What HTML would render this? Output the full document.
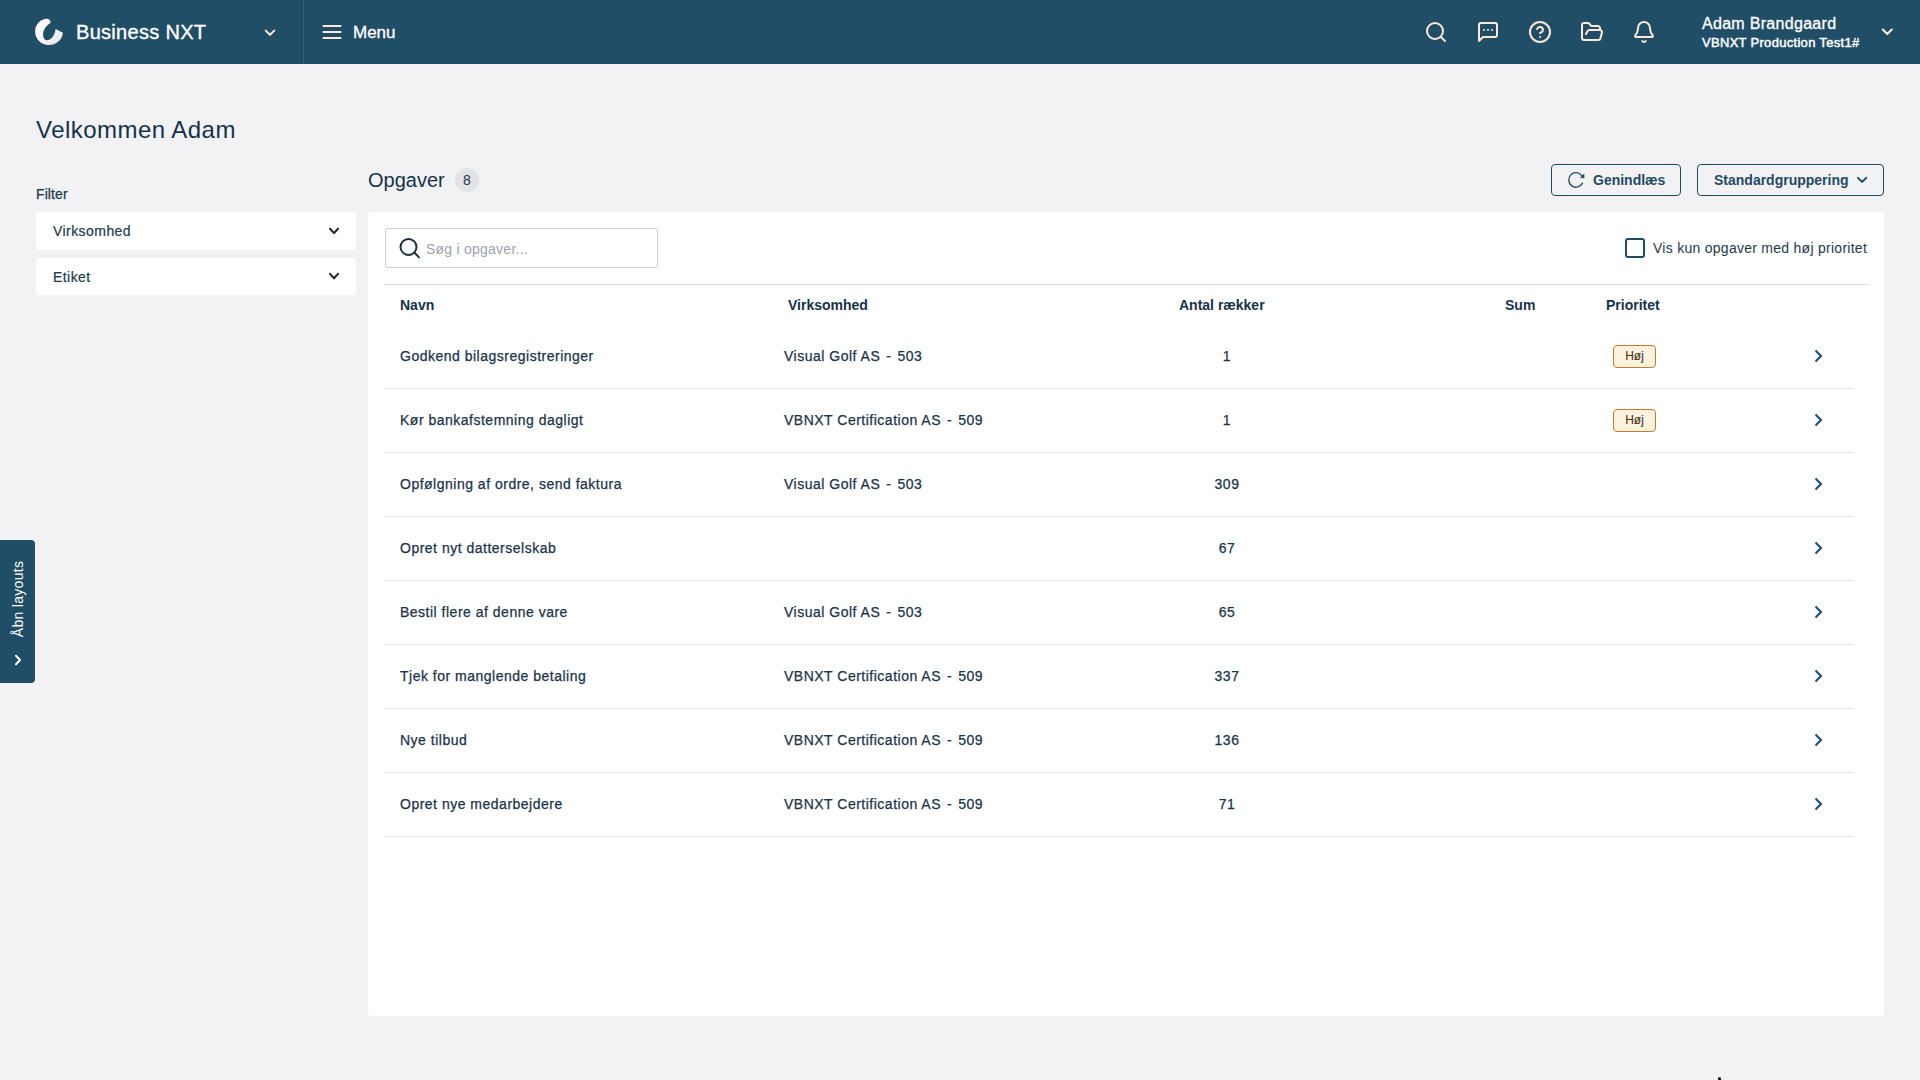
<!DOCTYPE html>
<html><head><meta charset="utf-8">
<style>
*{box-sizing:border-box;margin:0;padding:0}
html,body{width:1920px;height:1080px;overflow:hidden}
body{background:#f2f2f4;font-family:"Liberation Sans",sans-serif;color:#1b3a4c;position:relative}
.abs{position:absolute}
#hdr{position:absolute;left:0;top:0;width:1920px;height:64px;background:#214e67}
#hdr .div{position:absolute;left:303px;top:0;width:1px;height:64px;background:#335f78}
.brand{position:absolute;left:76px;top:20px;font-size:20px;letter-spacing:0.3px;color:#fff;white-space:nowrap;line-height:24px;-webkit-text-stroke:0.35px #fff}
.menu{position:absolute;left:353px;top:22.5px;font-size:17px;color:#fff;line-height:20px;-webkit-text-stroke:0.3px #fff}
.ic{position:absolute}
.hi{fill:none;stroke:#fde9d5;stroke-width:2;stroke-linecap:round;stroke-linejoin:round}
.uname{position:absolute;left:1702px;top:14px;font-size:16px;letter-spacing:0.3px;color:#fff;line-height:20px;white-space:nowrap;-webkit-text-stroke:0.3px #fff}
.uorg{position:absolute;left:1702px;top:35px;font-size:13px;color:#fff;line-height:16px;white-space:nowrap;-webkit-text-stroke:0.45px #fff;letter-spacing:0.3px}
h1{position:absolute;left:36px;top:116px;font-size:24px;letter-spacing:0.46px;font-weight:normal;line-height:28px;color:#14334a;white-space:nowrap}
.flabel{position:absolute;left:36px;top:186px;font-size:14px;line-height:16px;color:#1b3a4c;-webkit-text-stroke:0.25px #1b3a4c;letter-spacing:0.1px}
.fsel{position:absolute;left:36px;width:320px;height:38px;background:#fff;border-radius:4px}
.fsel span{position:absolute;left:17px;top:11px;font-size:14px;letter-spacing:0.44px;line-height:16px;color:#1b3a4c;-webkit-text-stroke:0.2px #1b3a4c}
.fsel svg{position:absolute;left:291px;top:13px}
.opg{position:absolute;left:368px;top:168px;font-size:20px;line-height:24px;color:#14334a}
.badge8{position:absolute;left:455px;top:168px;width:24px;height:24px;border-radius:50%;background:#e2e3e7;font-size:14px;text-align:center;line-height:24px;color:#1b3a4c}
.btn{position:absolute;top:164px;height:32px;border:1px solid #1f4a63;border-radius:4px;font-size:14px;font-weight:bold;color:#1f4a63;line-height:30px;white-space:nowrap}
#card{position:absolute;left:368px;top:212px;width:1516px;height:804px;background:#fff;border-radius:4px}
.search{position:absolute;left:385px;top:228px;width:273px;height:40px;border:1px solid #c9ccd0;border-radius:3px;background:#fff}
.search span{position:absolute;left:40px;top:12px;font-size:14px;letter-spacing:0.24px;line-height:16px;color:#9ba3ab}
.chk{position:absolute;left:1625px;top:238px;width:20px;height:20px;border:2px solid #1f4a63;border-radius:3px}
.chkl{position:absolute;left:1653px;top:240px;font-size:14px;letter-spacing:0.27px;line-height:16px;white-space:nowrap}
.hline{position:absolute;left:384px;top:284px;width:1484px;height:1px;background:#dcdfe2}
.th{position:absolute;top:297px;font-size:14px;line-height:16px;font-weight:bold;white-space:nowrap;color:#14334a}
.row{position:absolute;left:384px;width:1470px;height:64px;border-bottom:1px solid #e1e3e6}
.row .c{position:absolute;top:23px;font-size:14px;letter-spacing:0.5px;line-height:16px;white-space:nowrap;color:#19334a;-webkit-text-stroke:0.25px #19334a}
.row .nm{left:16px}
.row .co{left:400px}
.row .dash{margin:0 6px}
.row .num{left:793px;width:100px;text-align:center}
.hoj{position:absolute;left:1229px;top:20px;width:43px;height:23px;border:1px solid #cc7a1f;border-radius:4px;background:#fdf1e0;font-size:12px;line-height:21px;text-align:center;color:#3d2a10}
.chev{position:absolute;left:1429px;top:24px}
.tabt{position:absolute;left:-22.35px;top:50.75px;width:80px;height:16px;transform:rotate(-90deg);font-size:14px;letter-spacing:0.3px;line-height:16px;color:#fff;white-space:nowrap;text-align:center}
#tab{position:absolute;left:0;top:540px;width:35px;height:143px;background:#214e67;border-radius:0 4px 4px 0}
</style></head><body>
<div id="hdr">

  <svg class="ic" style="left:30px;top:14px" width="40" height="36" viewBox="30 14 40 36"><path d="M50.7 22.7 C46.5 25.5 43.1 29.5 43.1 34 C43.1 38 44.5 40.2 46.8 40.2 C51.5 40.2 55 34.5 55.6 28.9 L62.9 32.8 C62.5 40 56 45.1 48.9 45.1 C41 45.1 35.1 39 35.1 31.5 C35.1 24 41 18.8 47 18.8 C49 18.8 50 19.5 50.7 22.7 Z" fill="url(#lg)"/><defs><linearGradient id="lg" x1="0" y1="0" x2="1" y2="1"><stop offset="0.45" stop-color="#fbfafa"/><stop offset="1" stop-color="#e4dfdf"/></linearGradient></defs></svg>
  <svg class="ic" style="left:264px;top:28px" width="12" height="10" viewBox="0 0 12 10"><path d="M1.8 2.6 L6 6.9 L10.2 2.6" fill="none" stroke="#fbeee0" stroke-width="2" stroke-linecap="round" stroke-linejoin="round"/></svg>
  <svg class="ic" style="left:322px;top:24px" width="20" height="16" viewBox="0 0 20 16"><path d="M1.5 2h17M1.5 8h17M1.5 14h17" stroke="#fdebd6" stroke-width="2" stroke-linecap="round"/></svg>
  <svg class="ic hi" style="left:1424px;top:20px" width="24" height="24" viewBox="0 0 24 24"><circle cx="11" cy="11" r="8"/><path d="m21 21-4.3-4.3"/></svg>
  <svg class="ic hi" style="left:1476px;top:20px" width="24" height="24" viewBox="0 0 24 24"><path d="M21 15a2 2 0 0 1-2 2H7l-4 4V5a2 2 0 0 1 2-2h14a2 2 0 0 1 2 2z"/><path d="M8 10h.01M12 10h.01M16 10h.01"/></svg>
  <svg class="ic hi" style="left:1528px;top:20px" width="24" height="24" viewBox="0 0 24 24"><circle cx="12" cy="12" r="10"/><path d="M9.09 9a3 3 0 0 1 5.83 1c0 2-3 3-3 3"/><path d="M12 17h.01"/></svg>
  <svg class="ic hi" style="left:1580px;top:20px" width="24" height="24" viewBox="0 0 24 24"><path d="m6 14 1.5-2.9A2 2 0 0 1 9.24 10H20a2 2 0 0 1 1.94 2.5l-1.54 6a2 2 0 0 1-1.95 1.5H4a2 2 0 0 1-2-2V5a2 2 0 0 1 2-2h3.9a2 2 0 0 1 1.69.9l.81 1.2a2 2 0 0 0 1.67.9H18a2 2 0 0 1 2 2v2"/></svg>
  <svg class="ic hi" style="left:1632px;top:20px" width="24" height="24" viewBox="0 0 24 24"><path d="M10.268 21a2 2 0 0 0 3.464 0"/><path d="M3.262 15.326A1 1 0 0 0 4 17h16a1 1 0 0 0 .74-1.673C19.41 13.956 18 12.499 18 8A6 6 0 0 0 6 8c0 4.499-1.411 5.956-2.738 7.326"/></svg>
  <svg class="ic" style="left:1881px;top:27px" width="12" height="10" viewBox="0 0 12 10"><path d="M1.8 2.5 L6.3 7 L10.8 2.5" fill="none" stroke="#fbeee0" stroke-width="2" stroke-linecap="round" stroke-linejoin="round"/></svg>
  <div class="brand">Business NXT</div>
  <div class="div"></div>
  <div class="menu">Menu</div>
  <div class="uname">Adam Brandgaard</div>
  <div class="uorg">VBNXT Production Test1#</div>
</div>
<h1>Velkommen Adam</h1>
<div class="flabel">Filter</div>
<div class="fsel" style="top:212px"><span>Virksomhed</span><svg style="position:absolute;left:292px;top:14px" width="12" height="10" viewBox="0 0 12 10"><path d="M2 2.7 L6 7.1 L10 2.7" fill="none" stroke="#222b33" stroke-width="2.1" stroke-linecap="round" stroke-linejoin="round"/></svg></div>
<div class="fsel" style="top:258px;height:37px"><span>Etiket</span><svg style="position:absolute;left:292px;top:13px" width="12" height="10" viewBox="0 0 12 10"><path d="M2 2.9 L6 7.3 L10 2.9" fill="none" stroke="#222b33" stroke-width="2.1" stroke-linecap="round" stroke-linejoin="round"/></svg></div>
<div class="opg">Opgaver</div>
<div class="badge8">8</div>
<div class="btn" style="left:1551px;width:130px"><svg style="position:absolute;left:14px;top:6px" width="20" height="20" viewBox="0 0 20 20"><path d="M16.48 12.15 A7.25 7.25 0 1 1 15.8 4.6" fill="none" stroke="#1f4a63" stroke-width="1.35" stroke-linecap="round"/><path d="M18.1 2.9 L18.2 7 L14.3 6.6 Z" fill="#1f4a63" stroke="#1f4a63" stroke-width="0.4" stroke-linejoin="round"/></svg><span style="position:absolute;left:41px">Genindlæs</span></div>
<div class="btn" style="left:1697px;width:187px"><span style="position:absolute;left:16px">Standardgruppering</span><svg style="position:absolute;left:158px;top:11px" width="12" height="10" viewBox="0 0 12 10"><path d="M2 1.9 L6.15 5.9 L10.3 1.9" fill="none" stroke="#1f4a63" stroke-width="2" stroke-linecap="round" stroke-linejoin="round"/></svg></div>
<div id="card"></div>
<div class="search"><svg style="position:absolute;left:11.6px;top:9px" width="24" height="22" viewBox="0 0 24 22"><circle cx="10.5" cy="9" r="8" fill="none" stroke="#1b3040" stroke-width="2"/><path d="M16.3 14.5 L21 19.4" stroke="#1b3040" stroke-width="2" stroke-linecap="round"/></svg><span>Søg i opgaver...</span></div>
<div class="chk"></div>
<div class="chkl">Vis kun opgaver med høj prioritet</div>
<div class="hline"></div>
<div class="th" style="left:400px">Navn</div>
<div class="th" style="left:788px">Virksomhed</div>
<div class="th" style="left:1179px">Antal rækker</div>
<div class="th" style="left:1505px">Sum</div>
<div class="th" style="left:1606px">Prioritet</div>
<div id="rows"><div class="row" style="top:325px"><span class="c nm">Godkend bilagsregistreringer</span><span class="c co">Visual Golf AS<span class="dash">-</span>503</span><span class="c num">1</span><span class="hoj">Høj</span><svg class="chev" width="10" height="14" viewBox="0 0 10 14"><path d="M2.5 1.5 L8 7 L2.5 12.5" fill="none" stroke="#1b5583" stroke-width="2.2"/></svg></div>
<div class="row" style="top:389px"><span class="c nm">Kør bankafstemning dagligt</span><span class="c co">VBNXT Certification AS<span class="dash">-</span>509</span><span class="c num">1</span><span class="hoj">Høj</span><svg class="chev" width="10" height="14" viewBox="0 0 10 14"><path d="M2.5 1.5 L8 7 L2.5 12.5" fill="none" stroke="#1b5583" stroke-width="2.2"/></svg></div>
<div class="row" style="top:453px"><span class="c nm">Opfølgning af ordre, send faktura</span><span class="c co">Visual Golf AS<span class="dash">-</span>503</span><span class="c num">309</span><svg class="chev" width="10" height="14" viewBox="0 0 10 14"><path d="M2.5 1.5 L8 7 L2.5 12.5" fill="none" stroke="#1b5583" stroke-width="2.2"/></svg></div>
<div class="row" style="top:517px"><span class="c nm">Opret nyt datterselskab</span><span class="c num">67</span><svg class="chev" width="10" height="14" viewBox="0 0 10 14"><path d="M2.5 1.5 L8 7 L2.5 12.5" fill="none" stroke="#1b5583" stroke-width="2.2"/></svg></div>
<div class="row" style="top:581px"><span class="c nm">Bestil flere af denne vare</span><span class="c co">Visual Golf AS<span class="dash">-</span>503</span><span class="c num">65</span><svg class="chev" width="10" height="14" viewBox="0 0 10 14"><path d="M2.5 1.5 L8 7 L2.5 12.5" fill="none" stroke="#1b5583" stroke-width="2.2"/></svg></div>
<div class="row" style="top:645px"><span class="c nm">Tjek for manglende betaling</span><span class="c co">VBNXT Certification AS<span class="dash">-</span>509</span><span class="c num">337</span><svg class="chev" width="10" height="14" viewBox="0 0 10 14"><path d="M2.5 1.5 L8 7 L2.5 12.5" fill="none" stroke="#1b5583" stroke-width="2.2"/></svg></div>
<div class="row" style="top:709px"><span class="c nm">Nye tilbud</span><span class="c co">VBNXT Certification AS<span class="dash">-</span>509</span><span class="c num">136</span><svg class="chev" width="10" height="14" viewBox="0 0 10 14"><path d="M2.5 1.5 L8 7 L2.5 12.5" fill="none" stroke="#1b5583" stroke-width="2.2"/></svg></div>
<div class="row" style="top:773px"><span class="c nm">Opret nye medarbejdere</span><span class="c co">VBNXT Certification AS<span class="dash">-</span>509</span><span class="c num">71</span><svg class="chev" width="10" height="14" viewBox="0 0 10 14"><path d="M2.5 1.5 L8 7 L2.5 12.5" fill="none" stroke="#1b5583" stroke-width="2.2"/></svg></div></div><!--/rows-->
<div id="tab"><div class="tabt">Åbn layouts</div><svg style="position:absolute;left:13px;top:114px" width="10" height="14" viewBox="0 0 10 14"><path d="M3 1.8 L7 6 L3 10.2" fill="none" stroke="#fff" stroke-width="2" stroke-linecap="round" stroke-linejoin="round"/></svg></div>
<div id="cur" style="position:absolute;left:1718px;top:1077px;width:3px;height:3px;background:#111;border-radius:1.5px 1.5px 0 0"></div>
</body></html>
